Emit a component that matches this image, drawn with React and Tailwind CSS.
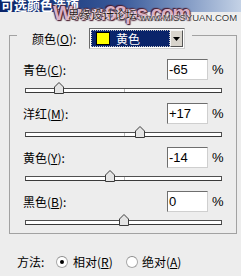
// 可选颜色 dialog (Photoshop Selective Color, cropped)
const rows = [
  { label: '青色', key: 'C', text: '-65', value: -65 },
  { label: '洋红', key: 'M', text: '+17', value: 17 },
  { label: '黄色', key: 'Y', text: '-14', value: -14 },
  { label: '黑色', key: 'B', text: '0', value: 0 },
];

function Thumb({ value }) {
  // track is 197px wide, range -100..100
  const left = ((value + 100) / 200) * 197 - 5;
  return (
    <svg className="absolute top-[2px]" style={{ left }} width="10" height="12" viewBox="0 0 10 12">
      <path d="M0.5 11.5 V5 L5 0.5 L9.5 5 V11.5 Z" fill="#e4e4e4" stroke="#3c3c3c" />
    </svg>
  );
}

function SliderRow({ label, hotkey, text, value }) {
  return (
    <div className="flex flex-col">
      <div className="flex items-center h-[21px]">
        <span className="w-[157px] pl-[13px] text-[12px] leading-none text-black">
          {label}(<span className="underline">{hotkey}</span>):
        </span>
        <div className="w-[41px] h-[21px] bg-white border-t border-l border-[#6e6e6e] border-r border-b border-r-[#cfcfcf] border-b-[#cfcfcf] pl-[1px] flex items-center font-['Liberation_Sans',sans-serif] text-[13px] text-black">
          {text}
        </div>
        <span className="ml-[4px] font-['Liberation_Sans',sans-serif] text-[13px] text-black">%</span>
      </div>
      <div className="relative ml-[15px] w-[197px] h-[14px]">
        <div className="relative mt-[8px] h-[5px] bg-white border border-[#505050] border-b-[#3a3a3a]">
          <div className="absolute left-[98px] top-0 w-px h-full bg-[#b8b8b8]" />
        </div>
        <Thumb value={value} />
      </div>
    </div>
  );
}

function Radio({ checked }) {
  return (
    <span className="w-[12px] h-[12px] rounded-full bg-white border border-[#a8a8a8] border-t-[#8c8c8c] flex items-center justify-center">
      {checked && <span className="w-[4px] h-[4px] rounded-full bg-black" />}
    </span>
  );
}

export default function App() {
  return (
    <div className="relative w-[241px] h-[276px] overflow-hidden bg-[#ededed] font-['Noto_Sans_CJK_SC','Noto_Sans',sans-serif] text-black">
      {/* タイトルバー */}
      <div className="h-[12px] overflow-hidden bg-gradient-to-r from-[#0a246a] via-[#3a5a9a] to-[#c4d2e6]">
        <div className="-mt-[3px] pl-[1px] text-[13px] leading-[15px] font-bold text-white">可选颜色选项</div>
      </div>

      {/* watermark */}
      <div className="absolute left-[53px] top-[2px] font-['Liberation_Sans',sans-serif] text-[21px] font-bold tracking-[-1.5px] leading-none text-[#d9b0c4] [text-shadow:0_0_1px_#4a1e30,0_0_2px_#4a1e30,1px_1px_1px_#4a1e30,-1px_-1px_1px_#4a1e30]">
        Www.68ps.com
      </div>
      <div className="absolute left-[68px] top-[9px] text-[11.5px] leading-none text-[#2a1a1a] [text-shadow:0_0_2px_#fff,0_0_2px_#fff]">
        思缘设计论坛
      </div>
      <div className="absolute left-[140px] top-[13px] font-['Liberation_Sans',sans-serif] text-[9.5px] leading-none text-[#3a3a3a] [text-shadow:0_0_2px_#fff,0_0_2px_#fff]">
        www.MISSYUAN.COM
      </div>

      {/* group box */}
      <div className="ml-[9px] mt-[23px] w-[228px] border border-[#a2a2a2] pb-[7px]">
        <div className="-mt-[8px] ml-[7px] w-[175px] flex items-center bg-[#ededed] pl-[15px]">
          <span className="w-[57px] text-[12px] leading-none">
            颜色(<span className="underline">O</span>):
          </span>
          <div className="flex w-[96px] h-[21px] border border-[#6a6a6a] border-r-[#d0d0d0] border-b-[#d0d0d0] bg-white p-px">
            <div className="flex-1 flex items-center bg-[#0a246a] border border-dotted border-[#c8c8c8]">
              <span className="ml-[4px] w-[14px] h-[13px] bg-[#ffff00] border border-black" />
              <span className="ml-[6px] text-[12px] leading-none text-white">黄色</span>
            </div>
            <div className="w-[13px] flex items-center justify-center bg-[#d8d4cc] border border-[#f4f4f4] border-r-[#555] border-b-[#555]">
              <svg width="7" height="4" viewBox="0 0 7 4">
                <path d="M0 0 H7 L3.5 4 Z" fill="#000" />
              </svg>
            </div>
          </div>
        </div>

        <div className="mt-[10px] flex flex-col gap-[9px]">
          {rows.map((r) => (
            <SliderRow key={r.key} label={r.label} hotkey={r.key} text={r.text} value={r.value} />
          ))}
        </div>
      </div>

      {/* 方法 */}
      <div className="mt-[20px] pl-[17px] flex items-center h-[16px] text-[12px] leading-none">
        <span className="w-[39px]">方法:</span>
        <Radio checked />
        <span className="ml-[5px] w-[53px]">
          相对(<span className="underline">R</span>)
        </span>
        <Radio />
        <span className="ml-[4px]">
          绝对(<span className="underline">A</span>)
        </span>
      </div>
    </div>
  );
}
